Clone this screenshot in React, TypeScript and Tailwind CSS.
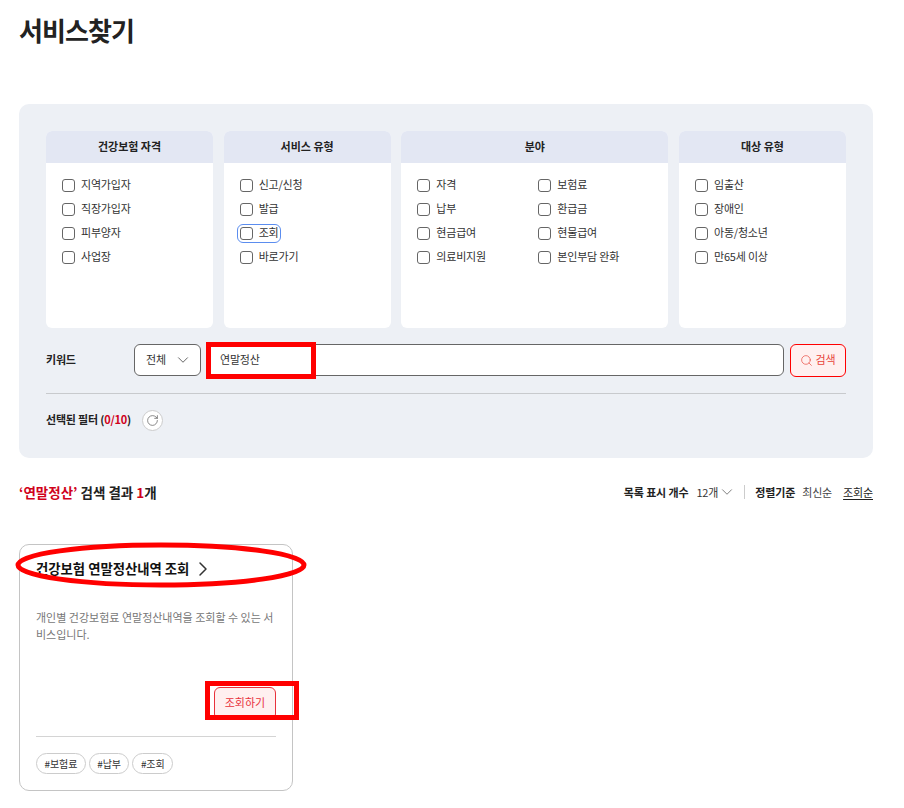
import { ChevronDown, ChevronRight, RotateCw, Search } from "lucide-react";

const FONT = "font-['Noto_Sans_CJK_KR','Noto_Sans',sans-serif]";

function Check({ label }: { label: string }) {
  return (
    <label className="flex h-6 items-center gap-[6px] text-[11px] tracking-[-0.2px] text-[#333]">
      <span className="h-[13px] w-[13px] rounded-[3px] border border-[#666] bg-white" />
      <span className="pb-[2px]">{label}</span>
    </label>
  );
}

function CardHead({ title }: { title: string }) {
  return <div className="flex h-8 items-center justify-center bg-[#e3e7f3] pb-[2px] text-[11px] font-bold text-[#222]">{title}</div>;
}

function FilterCard({ title, items }: { title: string; items: string[] }) {
  return (
    <div className="overflow-hidden rounded-[6px] bg-white">
      <CardHead title={title} />
      <div className="px-4 pt-[10px]">
        {items.map((item) => (
          item === "조회" ? (
            <div key={item} className="relative">
              <span className="absolute left-[-3px] top-[3px] h-[19px] w-[44px] rounded-[6px] border border-[#5b8def]" />
              <Check label={item} />
            </div>
          ) : <Check key={item} label={item} />
        ))}
      </div>
    </div>
  );
}

export default function App() {
  return (
    <div className={`${FONT} relative h-[808px] w-[904px] overflow-hidden bg-white pl-[19px] pr-[31px] text-[#222]`}>
      <h1 className="flex h-[104px] items-start pt-[10px] text-[26px] font-bold leading-[40px] tracking-[-0.9px] text-[#222]">서비스찾기</h1>

      <section className="h-[354px] rounded-[10px] bg-[#edf0f5] px-[27px] pt-[27px]">
        <div className="grid h-[197px] grid-cols-[167px_167px_267px_167px] justify-between">
          <FilterCard title="건강보험 자격" items={["지역가입자", "직장가입자", "피부양자", "사업장"]} />
          <FilterCard title="서비스 유형" items={["신고/신청", "발급", "조회", "바로가기"]} />
          <div className="overflow-hidden rounded-[6px] bg-white">
            <CardHead title="분야" />
            <div className="grid grid-cols-[121px_1fr] px-4 pt-[10px]">
              {["자격", "보험료", "납부", "환급금", "현금급여", "현물급여", "의료비지원", "본인부담 완화"].map((item) => (
                <Check key={item} label={item} />
              ))}
            </div>
          </div>
          <FilterCard title="대상 유형" items={["임출산", "장애인", "아동/청소년", "만65세 이상"]} />
        </div>

        <div className="mt-4 flex items-start">
          <span className="flex h-8 w-[88px] items-center pb-[2px] text-[11px] font-bold tracking-[-0.2px]">키워드</span>
          <div className="flex h-[32px] w-[67px] items-center justify-between rounded-[6px] border border-[#666] bg-white pl-[11px] pr-2 text-[11px] text-[#333]">
            <span className="pb-[2px]">전체</span>
            <ChevronDown size={18} strokeWidth={1} />
          </div>
          <div className="ml-[5px] flex h-[32px] w-[578px] items-center rounded-[6px] border border-[#666] bg-white px-[13px] pb-[2px] text-[11px] tracking-[-0.2px] text-[#333]">연말정산</div>
          <button className="ml-[6px] flex h-[33px] w-[56px] items-center justify-center gap-[2px] rounded-[6px] border border-[#f00] bg-[#fff0f0] text-[11px] text-[#e8453c]">
            <Search size={13} strokeWidth={1.25} />
            <span className="pb-[2px]">검색</span>
          </button>
        </div>

        <div className="mt-4 h-px bg-[#c8cacd]" />

        <div className="mt-4 flex items-center gap-[11px]">
          <span className="pb-[2px] text-[11px] font-bold tracking-[-0.2px]">
            선택된 필터 (<span className="text-[#d0021b]">0/10</span>)
          </span>
          <span className="flex h-[21px] w-[21px] items-center justify-center rounded-full border border-[#ccc] bg-white text-[#555]">
            <RotateCw size={13} strokeWidth={1.25} />
          </span>
        </div>
      </section>

      <div className="mt-[24px] flex h-5 items-center justify-between">
        <p className="text-[13.5px] font-bold">
          <span className="text-[#d0021b]">‘연말정산’</span> 검색 결과 <span className="text-[#d0021b]">1</span>개
        </p>
        <div className="flex items-center text-[11px] tracking-[-0.15px]">
          <span className="font-bold">목록 표시 개수</span>
          <span className="ml-2 text-[#333]">12개</span>
          <ChevronDown size={18} strokeWidth={1} className="text-[#555]" />
          <span className="ml-2 h-[14px] w-px bg-[#ccc]" />
          <span className="ml-[10px] font-bold">정렬기준</span>
          <span className="ml-[7px] text-[#444]">최신순</span>
          <span className="ml-[11px] text-[#222] underline underline-offset-2">조회순</span>
        </div>
      </div>

      <article className="mt-[42px] flex h-[247px] w-[274px] flex-col rounded-[10px] border border-[#c4c4c4] px-4 pt-[14px]">
        <div className="flex h-5 items-center gap-[2px] text-[13.35px] font-bold text-[#111]">
          건강보험 연말정산내역 조회
          <ChevronRight size={24} strokeWidth={1.5} className="shrink-0 text-[#333]" />
        </div>
        <p className="mt-[30px] text-[11px] leading-[17px] text-[#777]">개인별 건강보험료 연말정산내역을 조회할 수 있는 서비스입니다.</p>
        <button className="ml-auto mt-[44px] flex h-[33px] w-[62px] shrink-0 items-center justify-center rounded-[6px] border border-[#e8323c] bg-[#fff0f0] pb-[2px] text-[11px] text-[#e8323c]">조회하기</button>
        <div className="mt-4 h-px shrink-0 bg-[#d4d4d4]" />
        <div className="mt-4 flex gap-[3px]">
          {["#보험료", "#납부", "#조회"].map((tag) => (
            <span key={tag} className="flex h-[21px] items-center rounded-full border border-[#ccc] px-[7.5px] pb-px text-[10px] tracking-[-0.1px] text-[#333]">{tag}</span>
          ))}
        </div>
      </article>

      {/* red annotation marks drawn over the screenshot */}
      <span className="absolute left-[206px] top-[342px] h-[37px] w-[110px] border-[5px] border-[#f00]" />
      <span className="absolute left-[205px] top-[681px] h-[39px] w-[94px] border-[5px] border-[#f00]" />
      <svg className="absolute left-[14px] top-[541px]" width="294" height="50" viewBox="0 0 294 50">
        <ellipse cx="147" cy="24" rx="143" ry="20" fill="none" stroke="#f00" strokeWidth="5" />
      </svg>
    </div>
  );
}
